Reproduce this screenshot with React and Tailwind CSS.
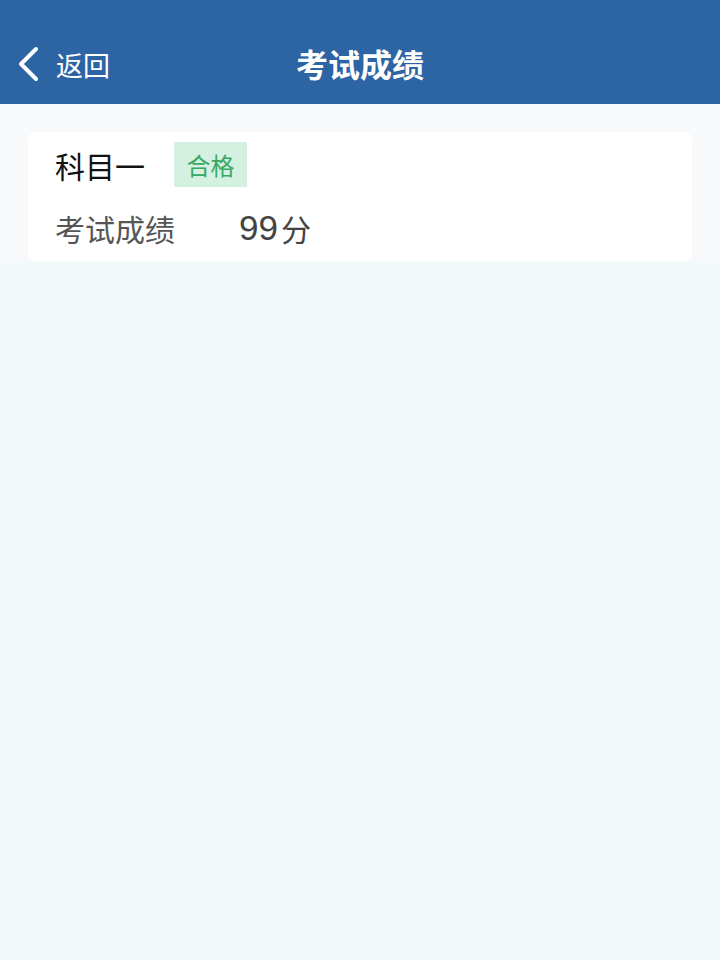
import React from "react";

export default function App() {
  return (
    <div
      className="w-[720px] h-[960px] bg-[#f1f9f9] flex flex-col"
      style={{ fontFamily: '"Noto Sans CJK SC", "Noto Sans", sans-serif' }}
    >
      <div className="h-[104px] bg-[#2c64a4] flex items-center relative shrink-0">
        <div className="flex items-center pl-[16px] pt-[24px] text-white">
          <svg width="24" height="36" viewBox="0 0 24 36" fill="none">
            <path d="M20 3 L5 18 L20 33" stroke="white" strokeWidth="4" strokeLinecap="round" strokeLinejoin="round" />
          </svg>
          <span className="ml-[16px] text-[27px] leading-none">返回</span>
        </div>
        <div className="absolute left-0 right-0 top-[22px] bottom-0 flex items-center justify-center pointer-events-none">
          <span className="text-white text-[32px] font-bold leading-none">考试成绩</span>
        </div>
      </div>
      <div className="bg-[#f7f9fb] px-[28px] pt-[28px] pb-[1px]">
        <div className="bg-white rounded-[8px] h-[129px] pl-[27px] pt-[10px]">
          <div className="flex items-center">
            <span className="text-[30px] text-[#111] leading-none">科目一</span>
            <span className="ml-[29px] h-[45px] w-[73px] flex items-center justify-center bg-[#d3f0e0] text-[#3aa864] text-[24px] leading-none">
              合格
            </span>
          </div>
          <div className="flex items-center mt-[23px]">
            <span className="text-[30px] text-[#555] leading-none w-[184px]">考试成绩</span>
            <span
              className="text-[35px] text-[#444] leading-none"
              style={{ fontFamily: '"Liberation Sans", Arial, sans-serif' }}
            >
              99
            </span>
            <span className="ml-[3px] text-[30px] text-[#444] leading-none">分</span>
          </div>
        </div>
      </div>
    </div>
  );
}
